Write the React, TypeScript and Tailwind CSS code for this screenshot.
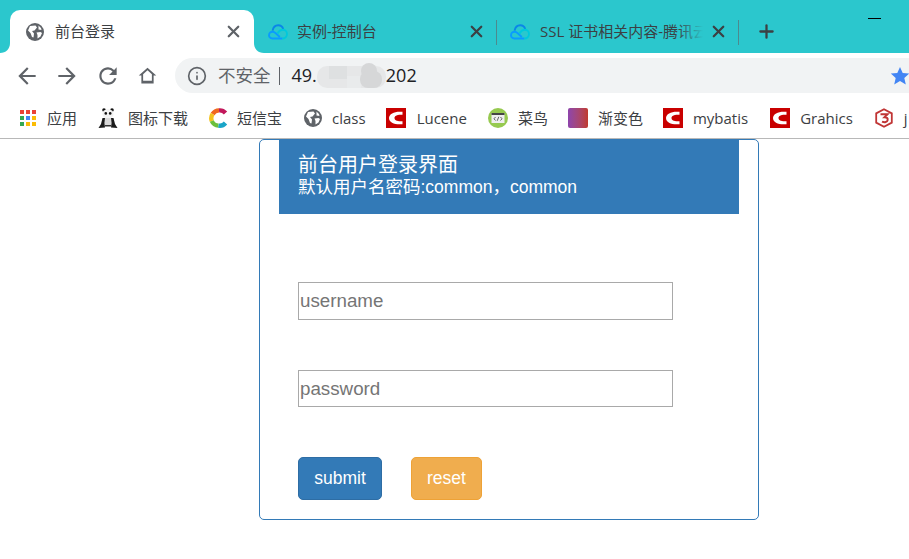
import { Info, Plus, X } from "lucide-react";
import { ReactNode } from "react";

const uiFont = "font-['Open_Sans','Noto_Sans_CJK_SC',sans-serif]";

const GlobeIcon = ({ size = 18 }: { size?: number }) => (
  <svg width={size} height={size} viewBox="0 0 18 18" className="shrink-0">
    <circle cx="9" cy="9" r="9" fill="#5f6368" />
    <path d="M4 3 L9.5 2.5 L11 4.5 L8.5 7.5 L6 8 L8 10.5 L7.5 14.5 L6 14 L4.5 10 L2 7.5 Z" fill="#fff" />
    <path d="M12.5 2.5 L15 5 L15.5 7 L12.5 6.5 Z M10.5 9.5 L14.5 9 L16 10 L14.5 13.5 L11.5 15.5 L11.5 12 Z" fill="#fff" />
  </svg>
);

const CloudIcon = () => (
  <svg width="20" height="16" viewBox="0 0 20 16" fill="none" className="shrink-0">
    <path d="M14.5 14.5 L4.5 14.5 C2 14.5 1 12.7 1 11.2 C1 9.3 2.6 7.8 4.6 7.8 C6 7.8 7 8.6 8 9.5 L11.8 13" stroke="#0a9bff" strokeWidth="1.9" />
    <path d="M4.6 6.6 C5.2 3.2 7.6 1.2 10.2 1.2 C12.8 1.2 14.6 2.8 15.2 5" stroke="#0a86e8" strokeWidth="1.9" />
    <path d="M9.5 9.5 C11 7 12.8 5.8 14.8 5.8 C17.2 5.8 19 7.6 19 10.1 C19 12.6 17 14.5 14.5 14.5" stroke="#00c8dc" strokeWidth="1.9" />
  </svg>
);

const CloseIcon = ({ className }: { className: string }) => (
  <X size={19} strokeWidth={2.8} className={`shrink-0 ${className}`} />
);

const AppsIcon = () => (
  <div className="grid w-4 shrink-0 grid-cols-3 gap-[2px]">
    {["#ea4335", "#ea4335", "#ea4335", "#34a853", "#4285f4", "#fbbc05", "#34a853", "#fbbc05", "#fbbc05"].map((c, i) => (
      <span key={i} className="h-[4px] w-[4px]" style={{ backgroundColor: c }} />
    ))}
  </div>
);

const PandaIcon = () => (
  <svg width="20" height="20" viewBox="0 0 20 20" className="shrink-0">
    <circle cx="6" cy="2" r="1.8" fill="#111" />
    <circle cx="14" cy="2" r="1.8" fill="#111" />
    <ellipse cx="10" cy="6" rx="5.6" ry="4.8" fill="#f2f2f2" />
    <circle cx="7.8" cy="5.4" r="1.3" fill="#111" />
    <circle cx="12.2" cy="5.4" r="1.3" fill="#111" />
    <path d="M4.5 10 L7 10 L6.5 15 L7 19.5 L0.5 20 L3 16 Z M15.5 10 L13 10 L13.5 15 L13 19.5 L19.5 20 L17 16 Z" fill="#1a1a1a" />
    <rect x="7" y="10" width="6" height="7" fill="#d8d8d8" />
    <rect x="7" y="17" width="6" height="1.5" fill="#333" />
  </svg>
);

const RingIcon = () => (
  <svg width="19" height="20" viewBox="0 0 19 20" fill="none" className="shrink-0">
    <path d="M16.5 5 A7.6 7.6 0 0 0 10 2.4" stroke="#c2185b" strokeWidth="4.4" />
    <path d="M10 2.4 A7.6 7.6 0 0 0 3.6 6" stroke="#f0671f" strokeWidth="4.4" />
    <path d="M3.6 6 A7.6 7.6 0 0 0 2.8 13" stroke="#f4c21d" strokeWidth="4.4" />
    <path d="M2.8 13 A7.6 7.6 0 0 0 9.5 17.6" stroke="#6cbf3c" strokeWidth="4.4" />
    <path d="M9.5 17.6 A7.6 7.6 0 0 0 16.5 15" stroke="#1aa5c8" strokeWidth="4.4" />
  </svg>
);

const RedCIcon = () => (
  <svg width="20" height="20" viewBox="0 0 20 20" className="shrink-0">
    <rect width="20" height="20" fill="#c90000" />
    <path d="M16.5 3.8 C9 3 3.2 5.5 3 10 C3 14.5 9 17 16.5 16.2 L16.5 13.2 C12 13.8 8.5 12.5 8.5 10 C8.5 7.5 12 6.2 16.5 6.8 Z" fill="#fff" />
  </svg>
);

const RunoobIcon = () => (
  <svg width="20" height="20" viewBox="0 0 20 20" className="shrink-0">
    <circle cx="10" cy="10" r="10" fill="#96c94f" />
    <rect x="3.5" y="5" width="13" height="10" fill="#eeeeee" />
    <rect x="3.5" y="5" width="13" height="2" fill="#444" />
    <path d="M7.5 9 L6 10.8 L7.5 12.5 M12.5 9 L14 10.8 L12.5 12.5 M10.8 8.8 L9.2 12.8" stroke="#555" strokeWidth="0.9" fill="none" />
  </svg>
);

const HexIcon = () => (
  <svg width="18" height="20" viewBox="0 0 18 20" fill="none" className="shrink-0">
    <path d="M9 1.2 L16.8 5.4 L16.8 14.6 L9 18.8 L1.2 14.6 L1.2 5.4 Z" stroke="#c03535" strokeWidth="1.8" />
    <path d="M5.5 6.2 L12.5 6.2 L9.5 9.2 C12 9.2 13 10.5 12.6 12.2 C12.2 14 9.8 14.8 7 13.6" stroke="#c03535" strokeWidth="2" />
  </svg>
);

// smudge over the blurred part of the address
const Blur = () => (
  <svg width="69" height="26" viewBox="0 0 69 26" className="shrink-0">
    <rect x="0" y="3" width="69" height="22" rx="10" fill="#e6e7e8" />
    <rect x="12" y="3" width="18" height="13" fill="#dee0e1" />
    <rect x="30" y="13" width="14" height="12" fill="#e9ebec" />
    <circle cx="52" cy="8" r="8" fill="#d6d7d8" />
    <rect x="43" y="8" width="22" height="17" rx="8" fill="#d6d7d8" />
  </svg>
);

const Bookmark = ({ icon, label, className }: { icon: ReactNode; label: string; className: string }) => (
  <div className={`flex shrink-0 items-center ${className}`}>
    {icon}
    <span className="whitespace-nowrap text-[15px] text-[#3c4043]">{label}</span>
  </div>
);

export default function App() {
  return (
    <div className={`h-[559px] w-[909px] overflow-hidden bg-white ${uiFont}`}>
      {/* tab strip */}
      <div className="relative flex h-[53px] items-end bg-[#2bc7cd] pl-[10px]">
        <div className="relative flex h-[43px] w-[244px] items-center rounded-t-[10px] bg-white pl-[16px] pr-[11px]">
          <svg width="10" height="10" viewBox="0 0 10 10" className="absolute bottom-0 left-[-10px]">
            <path d="M0 10 C6 10 10 6 10 0 L10 10 Z" fill="#fff" />
          </svg>
          <svg width="10" height="10" viewBox="0 0 10 10" className="absolute bottom-0 right-[-10px]">
            <path d="M10 10 C4 10 0 6 0 0 L0 10 Z" fill="#fff" />
          </svg>
          <GlobeIcon />
          <span className="ml-[11px] flex-1 text-[15px] text-[#3c4043]">前台登录</span>
          <CloseIcon className="text-[#5f6368]" />
        </div>
        <div className="flex h-[43px] w-[242px] items-center pl-[14px] pr-[10px]">
          <CloudIcon />
          <span className="ml-[9px] flex-1 text-[15px] text-[#3c4043]">实例-控制台</span>
          <CloseIcon className="text-[#3c4043]" />
        </div>
        <div className="mb-[8px] h-[25px] w-px bg-[#4d8a8e]" />
        <div className="flex h-[43px] w-[241px] items-center pl-[13px]">
          <CloudIcon />
          <span className="relative ml-[10px] w-[163px] overflow-hidden whitespace-nowrap text-[15px] text-[#3c4043]">
            SSL 证书相关内容-腾讯云
            <span className="absolute inset-y-0 right-0 w-[26px] bg-gradient-to-r from-transparent to-[#2bc7cd]" />
          </span>
          <CloseIcon className="ml-[6px] text-[#3c4043]" />
        </div>
        <div className="mb-[8px] h-[25px] w-px bg-[#4d8a8e]" />
        <Plus size={21} strokeWidth={2.6} className="mb-[11px] ml-[17px] text-[#3c4043]" />
        <div className="absolute right-[28px] top-[18px] h-px w-[13px] bg-black" />
      </div>

      {/* toolbar */}
      <div className="flex h-[45px] items-end">
        <div className="flex h-[40px] w-[175px] items-center pb-[5px] text-[#5f6368]">
          <svg width="26" height="26" viewBox="0 0 24 24" fill="currentColor" className="ml-[14px] shrink-0">
            <path d="M20 11H7.83l5.59-5.59L12 4l-8 8 8 8 1.41-1.41L7.83 13H20v-2z" />
          </svg>
          <svg width="26" height="26" viewBox="0 0 24 24" fill="currentColor" className="ml-[14px] shrink-0">
            <path d="M4 11h12.17l-5.59-5.59L12 4l8 8-8 8-1.41-1.41L16.17 13H4v-2z" />
          </svg>
          <svg width="26" height="26" viewBox="0 0 24 24" fill="currentColor" className="ml-[15px] shrink-0">
            <path d="M17.65 6.35A7.958 7.958 0 0 0 12 4c-4.42 0-7.99 3.58-7.99 8s3.57 8 7.99 8c3.73 0 6.84-2.55 7.73-6h-2.08A5.99 5.99 0 0 1 12 18c-3.31 0-6-2.69-6-6s2.69-6 6-6c1.66 0 3.14.69 4.22 1.78L13 11h7V4l-2.35 2.35z" />
          </svg>
          <svg width="21" height="21" viewBox="0 0 24 24" fill="currentColor" fillRule="evenodd" className="ml-[16px] shrink-0">
            <path d="M12 3L2 12h3v9h14v-9h3L12 3zm0 3l5 4.5V18H7v-7.5L12 6z" />
          </svg>
        </div>
        <div className="mb-[5px] flex h-[35px] flex-1 items-center rounded-l-full bg-[#f1f3f4] pl-[12px]">
          <Info size={20} strokeWidth={2} className="shrink-0 text-[#5f6368]" />
          <span className="ml-[11px] text-[17.5px] text-[#5f6368]">不安全</span>
          <span className="ml-[8px] h-[18px] w-px bg-[#5f6368]" />
          <span className="ml-[12px] text-[18px] text-[#202124]">49.</span>
          <Blur />
          <span className="text-[18px] text-[#202124]">202</span>
          <svg width="20" height="20" viewBox="0 0 20 20" className="ml-auto mr-[-1px] shrink-0">
            <path d="M10 1 L12.7 7 L19.2 7.6 L14.3 12 L15.8 18.4 L10 15 L4.2 18.4 L5.7 12 L0.8 7.6 L7.3 7 Z" fill="#4285f4" />
          </svg>
        </div>
      </div>

      {/* bookmarks */}
      <div className="flex h-[41px] items-center overflow-hidden border-b border-[#b8b8b8] pl-[20px]">
        <Bookmark icon={<AppsIcon />} label="应用" className="gap-[11px]" />
        <Bookmark icon={<PandaIcon />} label="图标下载" className="ml-[21px] gap-[10px]" />
        <Bookmark icon={<RingIcon />} label="短信宝" className="ml-[21px] gap-[9px]" />
        <Bookmark icon={<GlobeIcon />} label="class" className="ml-[22px] gap-[10px]" />
        <Bookmark icon={<RedCIcon />} label="Lucene" className="ml-[20px] gap-[11px]" />
        <Bookmark icon={<RunoobIcon />} label="菜鸟" className="ml-[21px] gap-[10px]" />
        <Bookmark
          icon={<span className="h-[20px] w-[20px] rounded-[2px] bg-gradient-to-r from-[#8e44ad] to-[#c0392b]" />}
          label="渐变色"
          className="ml-[20px] gap-[10px]"
        />
        <Bookmark icon={<RedCIcon />} label="mybatis" className="ml-[20px] gap-[10px]" />
        <Bookmark icon={<RedCIcon />} label="Grahics" className="ml-[22px] gap-[10px]" />
        <Bookmark icon={<HexIcon />} label="j" className="ml-[22px] gap-[11px]" />
      </div>

      {/* login card */}
      <div className="ml-[259px] h-[381px] w-[500px] rounded-[5px] border border-[#337ab7] font-['Liberation_Sans','Noto_Sans_CJK_SC',sans-serif]">
        <div className="mx-[19px] -mt-px h-[75px] bg-[#337ab7] pl-[19px] pt-[14px] text-white">
          <div className="text-[20px] leading-[24px]">前台用户登录界面</div>
          <div className="text-[17.5px] leading-[21px]">默认用户名密码:common，common</div>
        </div>
        <div className="pl-[38px] pt-[68px]">
          <input
            placeholder="username"
            className="block h-[38px] w-[375px] border border-[#a9a9a9] px-[1px] text-[18.75px] outline-none placeholder:text-[#757575]"
          />
          <input
            placeholder="password"
            className="mt-[50px] block h-[37px] w-[375px] border border-[#a9a9a9] px-[1px] pt-[1px] text-[18.75px] outline-none placeholder:text-[#757575]"
          />
          <div className="mt-[50px] flex gap-[29px]">
            <button className="h-[43px] w-[84px] rounded-[5px] border border-[#2e6da4] bg-[#337ab7] text-[17.5px] text-white">submit</button>
            <button className="h-[43px] w-[71px] rounded-[5px] border border-[#eea236] bg-[#f0ad4e] text-[17.5px] text-white">reset</button>
          </div>
        </div>
      </div>
    </div>
  );
}
